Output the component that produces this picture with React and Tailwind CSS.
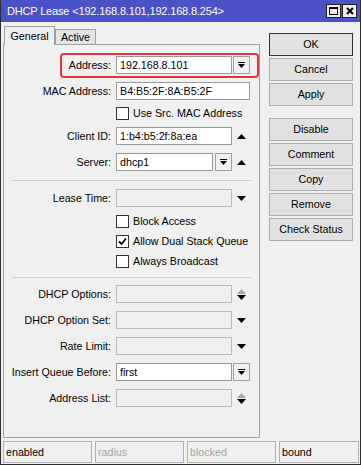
import React from "react";

function UpTri({ gray }) {
  return (
    <svg width="9" height="5" viewBox="0 0 9 5">
      <polygon points="0,5 4.5,0 9,5" fill={gray ? "#a8a8a8" : "#000"} />
    </svg>
  );
}
function DownTri() {
  return (
    <svg width="9" height="5" viewBox="0 0 9 5">
      <polygon points="0,0 9,0 4.5,5" fill="#000" />
    </svg>
  );
}
function UpDown() {
  return (
    <div className="flex flex-col items-center gap-[1px]">
      <UpTri gray />
      <DownTri />
    </div>
  );
}
function DDButton() {
  return (
    <div className="w-[17px] h-[18px] border border-[#a0a0a0] bg-[#f0f0f0] flex items-center justify-center">
      <svg width="7" height="7" viewBox="0 0 7 7" shapeRendering="crispEdges">
        <rect x="0" y="0" width="7" height="1" fill="#000" />
        <polygon points="0,2 7,2 3.5,6" fill="#000" shapeRendering="auto" />
      </svg>
    </div>
  );
}
function Input({ w = 116, value, disabled }) {
  return (
    <div
      className={`h-[18px] border flex items-center pl-[3px] whitespace-nowrap overflow-hidden ${
        disabled ? "border-[#b9b9b9] bg-[#f0f0f0]" : "border-[#9a9a9a] bg-white"
      }`}
      style={{ width: w }}
    >
      {value}
    </div>
  );
}
function Side({ children }) {
  return <div className="w-[18px] flex justify-center items-center">{children}</div>;
}
function Row({ label, children, className = "" }) {
  return (
    <div className={`flex items-center h-[18px] ${className}`}>
      <div className="w-[108px] text-right pr-[1px] whitespace-nowrap">{label}</div>
      <div className="ml-[4px] flex items-center h-full">{children}</div>
    </div>
  );
}
function Check({ label, checked, className = "" }) {
  return (
    <div className={`flex items-center h-[13px] ${className}`}>
      <div className="ml-[112px] w-[13px] h-[13px] border border-[#333] bg-white flex items-center justify-center">
        {checked && (
          <svg width="9" height="9" viewBox="0 0 9 9">
            <path d="M1 4.5 L3.5 7 L8 1.5" stroke="#000" strokeWidth="1.8" fill="none" />
          </svg>
        )}
      </div>
      <div className="ml-[4px] whitespace-nowrap">{label}</div>
    </div>
  );
}
function Sep({ className = "" }) {
  return <div className={`mx-[8px] h-px bg-[#cfcfcf] ${className}`} />;
}
function Btn({ children, def, className = "" }) {
  return (
    <div
      className={`h-[23px] flex items-center justify-center bg-[#e1e1e1] border ${
        def ? "border-[#333]" : "border-[#adadad]"
      } ${className}`}
    >
      {children}
    </div>
  );
}
function Status({ w, children, gray }) {
  return (
    <div
      className={`h-[22px] border border-[#b0b0b0] flex items-center pl-[2px] ${
        gray ? "text-[#a5a5a5]" : "text-black"
      }`}
      style={{ width: w }}
    >
      {children}
    </div>
  );
}

export default function App() {
  return (
    <div className="w-[361px] h-[465px] bg-[#f0f0f0] border-x border-b border-[#2e2e2e] flex flex-col font-['Liberation_Sans',Arial,sans-serif] text-[10.7px] text-black overflow-hidden leading-none">
      {/* title bar */}
      <div className="h-[22px] bg-[#4b51c6] flex items-center pl-[6px] pr-[3px] shrink-0">
        <div className="text-white text-[11px] tracking-[-0.17px] whitespace-nowrap flex-1 pt-[1px]">
          DHCP Lease &lt;192.168.8.101,192.168.8.254&gt;
        </div>
        <div className="flex gap-[1px]">
          <div className="w-[15px] h-[14px] border border-[#222] bg-[#f0f0f0] flex items-center justify-center">
            <svg width="9" height="8" viewBox="0 0 9 8" shapeRendering="crispEdges">
              <rect x="0.5" y="0.5" width="8" height="7" fill="none" stroke="#000" />
              <rect x="0" y="0" width="9" height="2" fill="#000" />
            </svg>
          </div>
          <div className="w-[15px] h-[14px] border border-[#222] bg-[#f0f0f0] flex items-center justify-center">
            <svg width="8" height="8" viewBox="0 0 8 8">
              <path d="M1 1 L7 7 M7 1 L1 7" stroke="#000" strokeWidth="2" />
            </svg>
          </div>
        </div>
      </div>

      {/* body */}
      <div className="flex h-[416px] pl-[2px] pt-[4px] shrink-0">
        <div className="w-[257px] flex flex-col">
          {/* tabs */}
          <div className="flex items-start h-[19px] -mb-px relative z-10 pl-[1px]">
            <div className="w-[51px] h-[19px] bg-[#f0f0f0] border-x border-t border-[#a0a0a0] flex items-center justify-center">
              General
            </div>
            <div className="w-[41px] h-[15px] mt-[3px] bg-[#e3e3e3] border-x border-t border-[#a0a0a0] flex items-center justify-center">
              Active
            </div>
          </div>
          {/* panel */}
          <div className="relative flex-1 border border-[#a0a0a0] flex flex-col">
            <div className="absolute left-[56px] top-[8px] w-[199px] h-[25px] border-2 border-[#e3353a] rounded-[4px]" />

            <Row label="Address:" className="mt-[11px]">
              <Input value="192.168.8.101" />
              <div className="ml-[1px]">
                <DDButton />
              </div>
            </Row>
            <Row label="MAC Address:" className="mt-[8px]">
              <Input w={134} value="B4:B5:2F:8A:B5:2F" />
            </Row>
            <Check label="Use Src. MAC Address" className="mt-[7px]" />
            <Row label="Client ID:" className="mt-[7px]">
              <Input value="1:b4:b5:2f:8a:ea" />
              <Side>
                <UpTri />
              </Side>
            </Row>
            <Row label="Server:" className="mt-[8px]">
              <Input w={97} value="dhcp1" />
              <div className="ml-[2px]">
                <DDButton />
              </div>
              <Side>
                <UpTri />
              </Side>
            </Row>
            <Sep className="mt-[9px]" />
            <Row label="Lease Time:" className="mt-[8px]">
              <Input disabled />
              <Side>
                <DownTri />
              </Side>
            </Row>
            <Check label="Block Access" className="mt-[8px]" />
            <Check label="Allow Dual Stack Queue" checked className="mt-[7px]" />
            <Check label="Always Broadcast" className="mt-[7px]" />
            <Sep className="mt-[9px]" />
            <Row label="DHCP Options:" className="mt-[7px]">
              <Input disabled />
              <Side>
                <UpDown />
              </Side>
            </Row>
            <Row label="DHCP Option Set:" className="mt-[8px]">
              <Input disabled />
              <Side>
                <DownTri />
              </Side>
            </Row>
            <Row label="Rate Limit:" className="mt-[8px]">
              <Input disabled />
              <Side>
                <DownTri />
              </Side>
            </Row>
            <Row label="Insert Queue Before:" className="mt-[8px]">
              <Input value="first" />
              <div className="ml-[1px]">
                <DDButton />
              </div>
            </Row>
            <Row label="Address List:" className="mt-[8px]">
              <Input disabled />
              <Side>
                <UpDown />
              </Side>
            </Row>
          </div>
        </div>

        {/* buttons */}
        <div className="ml-[9px] w-[84px] flex flex-col pt-[7px]">
          <Btn def>OK</Btn>
          <Btn className="mt-[2px]">Cancel</Btn>
          <Btn className="mt-[2px]">Apply</Btn>
          <Btn className="mt-[12px]">Disable</Btn>
          <Btn className="mt-[2px]">Comment</Btn>
          <Btn className="mt-[2px]">Copy</Btn>
          <Btn className="mt-[2px]">Remove</Btn>
          <Btn className="mt-[2px]">Check Status</Btn>
        </div>
      </div>

      {/* status bar */}
      <div className="flex gap-[3px] pl-[2px] mt-[3px] shrink-0">
        <Status w={89}>enabled</Status>
        <Status w={89} gray>
          radius
        </Status>
        <Status w={89} gray>
          blocked
        </Status>
        <Status w={80}>bound</Status>
      </div>
    </div>
  );
}
